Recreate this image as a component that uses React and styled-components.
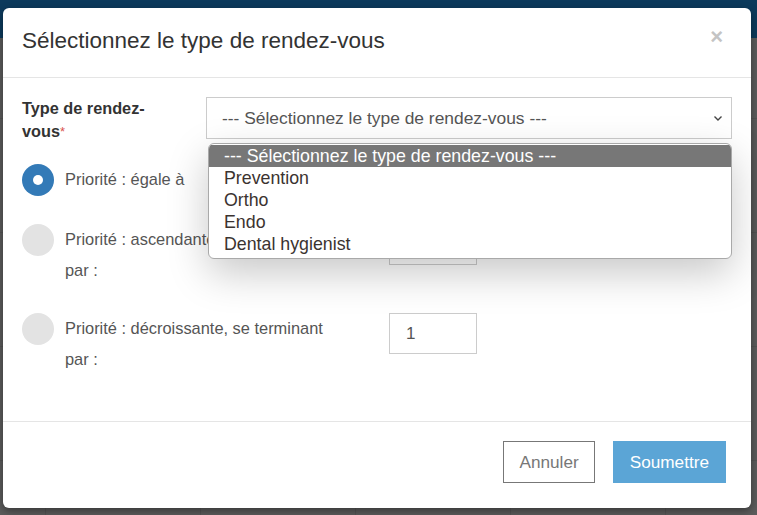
import React from 'react';
import styled, { createGlobalStyle } from 'styled-components';

const GlobalStyle = createGlobalStyle`
  html, body { margin: 0; padding: 0; }
  body {
    width: 757px;
    height: 515px;
    overflow: hidden;
    font-family: "Liberation Sans", Arial, sans-serif;
  }
`;

const Page = styled.div`
  position: relative;
  width: 757px;
  height: 515px;
  display: flex;
  flex-direction: column;
  background: #5c5c5c;
`;

const TopBar = styled.div`
  height: 38px;
  background: #0c3a5c;
`;

const Backdrop = styled.div`
  flex: 1;
  background-color: #5c5c5c;
  background-image:
    linear-gradient(#545454 1px, transparent 1px),
    linear-gradient(90deg, #545454 1px, transparent 1px);
  background-size: 100% 114px, 155px 100%;
  background-position: 0 80px, 45px 0;
`;

const Modal = styled.div`
  position: absolute;
  left: 3px;
  top: 8px;
  width: 748px;
  height: 500px;
  background: #fff;
  border-radius: 6px;
  display: flex;
  flex-direction: column;
  box-shadow: 0 3px 9px rgba(0, 0, 0, 0.4);
`;

const Header = styled.div`
  height: 70px;
  border-bottom: 1px solid #e5e5e5;
  display: flex;
  align-items: center;
  justify-content: space-between;
  padding: 0 28px 4px 19px;
  box-sizing: border-box;
`;

const Title = styled.h4`
  margin: 0;
  font-size: 22.5px;
  font-weight: normal;
  color: #333;
`;

const Close = styled.span`
  font-size: 22px;
  font-weight: bold;
  color: #c4c4c4;
  line-height: 1;
  margin-top: -8px;
`;

const Body = styled.div`
  flex: 1;
  padding: 19px 19px 0 19px;
`;

const FieldRow = styled.div`
  display: flex;
  align-items: flex-start;
  margin-bottom: 21px;
`;

const Label = styled.label`
  width: 184px;
  flex-shrink: 0;
  font-size: 16.3px;
  font-weight: bold;
  line-height: 23px;
  color: #333;
  box-sizing: border-box;
  padding-right: 34px;
`;

const Required = styled.span`
  color: #d9534f;
  font-size: 13px;
  vertical-align: top;
  font-weight: normal;
`;

const SelectWrap = styled.div`
  position: relative;
  flex: 1;
`;

const SelectBox = styled.div`
  height: 42px;
  border: 1px solid #ccc;
  box-sizing: border-box;
  display: flex;
  align-items: center;
  justify-content: space-between;
  padding: 0 7px 0 15px;
  font-size: 17.4px;
  color: #555;
`;

const Options = styled.ul`
  position: absolute;
  top: 46px;
  left: 2px;
  right: 0;
  margin: 0;
  padding: 1px 0 3px;
  list-style: none;
  background: #fff;
  border: 1px solid #a9a9a9;
  border-radius: 6px;
  box-shadow: 0 14px 40px rgba(0, 0, 0, 0.22);
  overflow: hidden;
  z-index: 2;
`;

const Option = styled.li`
  height: 22px;
  line-height: 22px;
  padding-left: 15px;
  font-size: 17.8px;
  color: ${(p) => (p.selected ? '#fff' : '#3b3330')};
  background: ${(p) => (p.selected ? '#777' : 'transparent')};
`;

const RadioRow = styled.div`
  display: grid;
  grid-template-columns: 43px 324px 88px;
  align-items: start;
  margin-bottom: 19px;
`;

const Radio = styled.span`
  width: 32px;
  height: 32px;
  border-radius: 50%;
  background: ${(p) => (p.checked ? '#337ab7' : '#e3e3e3')};
  display: flex;
  align-items: center;
  justify-content: center;
  &::after {
    content: '';
    width: 10px;
    height: 10px;
    border-radius: 50%;
    background: ${(p) => (p.checked ? '#fff' : 'transparent')};
  }
`;

const RadioText = styled.span`
  max-width: 280px;
  padding-bottom: 8px;
  font-size: 16.4px;
  line-height: 31px;
  color: #555;
`;

const NumInput = styled.div`
  width: 88px;
  height: 41px;
  border: 1px solid #ccc;
  box-sizing: border-box;
  padding-left: 16px;
  display: flex;
  align-items: center;
  font-size: 17px;
  color: #555;
`;

const Footer = styled.div`
  height: 87px;
  border-top: 1px solid #e5e5e5;
  box-sizing: border-box;
  display: flex;
  justify-content: flex-end;
  gap: 18px;
  padding: 19px 25px 0 0;
`;

const Button = styled.button`
  height: 42px;
  padding: 0 ${(p) => (p.primary ? '16px' : '15px')};
  font-family: "Liberation Sans", Arial, sans-serif;
  font-size: 17.2px;
  border-radius: 0;
  border: 1px solid ${(p) => (p.primary ? '#5ba5d6' : '#777')};
  background: ${(p) => (p.primary ? '#5ba5d6' : '#fff')};
  color: ${(p) => (p.primary ? '#fff' : '#777')};
`;

const Chevron = () => (
  <svg width="12" height="12" viewBox="0 0 12 12">
    <path d="M2.5 4.5 L6 8 L9.5 4.5" fill="none" stroke="#444" strokeWidth="1.4" />
  </svg>
);

const options = ['Prevention', 'Ortho', 'Endo', 'Dental hygienist'];

const priorities = [
  { text: 'Priorité : égale à', checked: true, value: '' },
  { text: 'Priorité : ascendante, se terminant par\u00a0:', value: '1' },
  { text: 'Priorité : décroissante, se terminant par\u00a0:', value: '1' },
];

export default function App() {
  return (
    <>
      <GlobalStyle />
      <Page>
        <TopBar />
        <Backdrop />
        <Modal>
          <Header>
            <Title>Sélectionnez le type de rendez-vous</Title>
            <Close>×</Close>
          </Header>
          <Body>
            <FieldRow>
              <Label>
                Type de rendez-vous<Required>*</Required>
              </Label>
              <SelectWrap>
                <SelectBox>
                  <span>--- Sélectionnez le type de rendez-vous ---</span>
                  <Chevron />
                </SelectBox>
                <Options>
                  <Option selected>--- Sélectionnez le type de rendez-vous ---</Option>
                  {options.map((o) => (
                    <Option key={o}>{o}</Option>
                  ))}
                </Options>
              </SelectWrap>
            </FieldRow>
            {priorities.map((p, i) => (
              <RadioRow key={i}>
                <Radio checked={p.checked} />
                <RadioText>{p.text}</RadioText>
                <NumInput>{p.value}</NumInput>
              </RadioRow>
            ))}
          </Body>
          <Footer>
            <Button>Annuler</Button>
            <Button primary>Soumettre</Button>
          </Footer>
        </Modal>
      </Page>
    </>
  );
}
